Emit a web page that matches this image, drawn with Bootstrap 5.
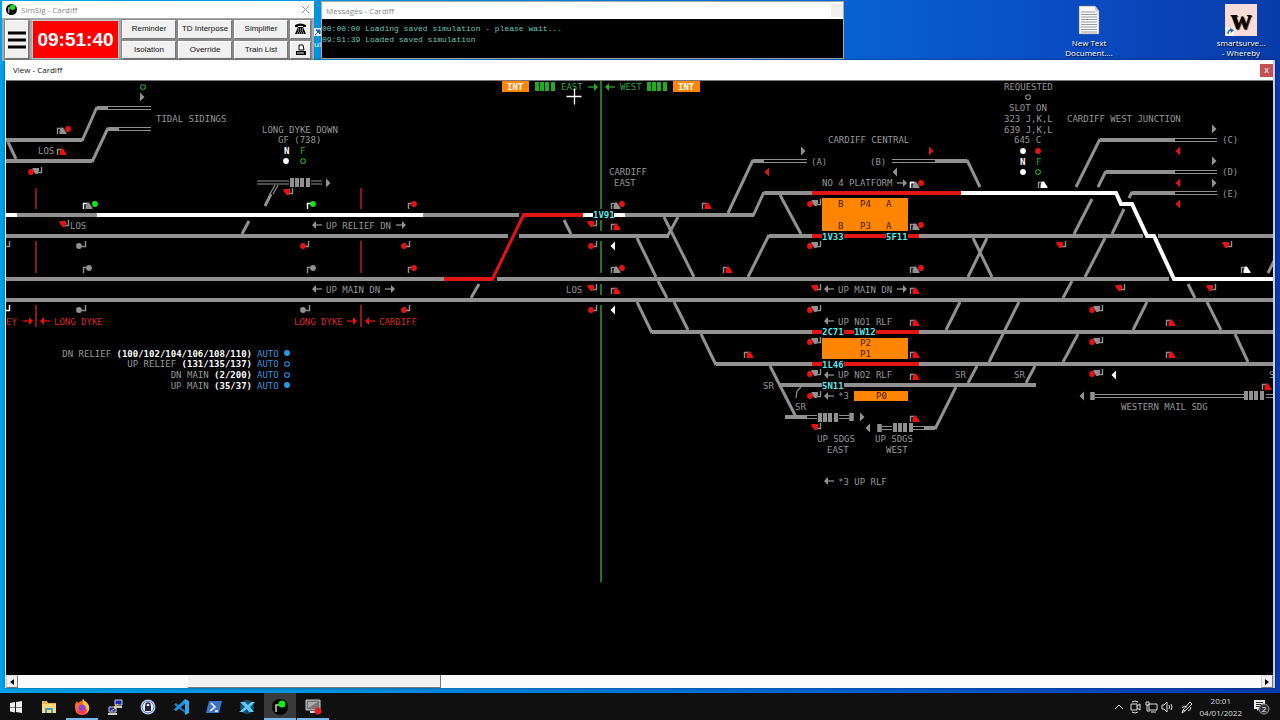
<!DOCTYPE html>
<html lang="en">
<head>
<meta charset="utf-8">
<meta name="viewport" content="width=device-width, initial-scale=1">
<title>View - Cardiff</title>
<link href="https://cdn.jsdelivr.net/npm/bootstrap@5.3.0/dist/css/bootstrap.min.css" rel="stylesheet">
<style>
  :root { --track:#919191; --label:#979797; --sig-red:#e31414; --cyan:#5ce6e6; --orange:#ff8400; }
  body { font-family:"Open Sans","Noto Sans",sans-serif; background:#0846b8; }
  .desk { background:linear-gradient(90deg,#00a2ec 0,#0094e0 24%,#0763d4 65%,#0a4bc2 84%,#093caa 100%); }
  .win { background:#fff; }
  .win-tools { left:2px; top:1px; width:312px; height:57px; }
  .win-msgs { left:321px; top:1px; width:523px; height:58px; border:1px solid #aaa; }
  .win-view { left:5px; right:5px; top:60px; bottom:5px; border-right:2px solid #c6cde6; box-shadow:0 0 3px #0006; }
  .caption { font-size:8px; line-height:17px; color:#888; }
  .view-caption { font-size:8px; line-height:20px; color:#111; }
  .close-red { width:13px; height:13px; background:#c4504f; color:#fff; font-size:9px; line-height:10px; }
  .tool-row { background:#a9a9a9; padding:2px 3px; gap:3px; }
  .tool { background:#f0f0f0; border:1px solid; border-color:#fff #777 #777 #fff; font:8px/14px "Liberation Sans",sans-serif; color:#111; padding:0; outline:1px solid #888; }
  .tool-grid { display:grid; grid-template-columns:54px 54px 54px 21px; gap:2px; }
  .clock-box { width:87px; background:#f00; color:#fff; border:1px solid #ccc; font:bold 19px/37px "Liberation Sans",sans-serif; }
  .log { background:#000; color:#6cc8b8; font:8px/11px "Liberation Mono",monospace; }
  .desk-icon { top:4px; width:60px; font-size:8px; line-height:10px; color:#fff; text-shadow:1px 1px 1px #000; }
  .diagram { background:#000; border-top:1px solid #777; margin-left:1px; }
  .diagram svg { display:block; }
  .diagram text { font:9px "DejaVu Sans Mono",monospace; fill:var(--label); white-space:pre; }
  .diagram text.white, .diagram tspan.white { fill:#fff; font-weight:bold; }
  .diagram text.green { fill:#37a337; }
  .diagram text.rd { fill:#d82828; }
  .diagram text.train { fill:var(--cyan); font-weight:bold; }
  .diagram text.plat { fill:#3a2000; }
  .diagram .blue { fill:#3b93dd; }
  .g { color:var(--track); } .r { color:var(--sig-red); } .w { color:#fff; } .gn { color:#2fa62f; }
  .sbar { height:13px; background:#fafafa; padding-left:1px; }
  .sbtn { width:12px; background:#f0f0f0; border:1px solid; border-color:#ddd #777 #777 #ccc; padding:0; }
  .sthumb { width:20%; margin-left:170px; background:#f0f0f0; border-right:1px solid #777; border-bottom:1px solid #777; }
  .taskbar { height:27px; background:#101010; color:#ddd; }
  .task-list { gap:1px; }
  .task { width:32px; background:none; border:0; border-bottom:2px solid transparent; padding:0; }
  .task.open { border-color:#76b9ed; }
  .task.current { background:#3a3a3a; }
  .tray { gap:2px; font-size:8px; line-height:12px; }
  .tray button { background:none; border:0; padding:0; color:#ddd; }
</style>
</head>
<body class="vh-100 d-flex flex-column overflow-hidden">

<main class="desk position-relative flex-grow-1 overflow-hidden">
  <a href="#" class="desk-icon position-absolute text-center text-decoration-none" style="left:1059px">
    <svg class="d-block mx-auto" width="24" height="34" viewBox="0 0 24 34"><path d="M2 2h16l4 5v23H2z" fill="#fafafa" stroke="#777" stroke-width=".6"/><path d="M18 2v5h4" fill="#ccc"/><path d="M4 8h14M4 10.500h16M4 13h16M4 15.500h16M4 18h16M4 20.500h16M4 23h16M4 25.500h16M4 28h16" stroke="#999" stroke-width="1"/></svg>
    New Text<br>Document....
  </a>
  <a href="#" class="desk-icon position-absolute text-center text-decoration-none" style="left:1211px">
    <svg class="d-block mx-auto" width="34" height="34" viewBox="0 0 34 34"><path d="M1 0h32v32H1z" fill="#f9dcd8"/><text x="17" y="25" text-anchor="middle" font-family="Liberation Serif,serif" font-weight="bold" font-size="29">w</text><path d="M2 24h8v8H2z" fill="#fff"/><path d="M4 30c0-3 1-4 3-4" fill="none" stroke="#1664b4" stroke-width="1.500"/><path d="M6 24l4 2-3 3z" fill="#1664b4"/></svg>
    smartsurve...<br>- Whereby
  </a>
  <svg class="position-absolute" style="left:314px;top:27px" width="8" height="24"><path d="M0 1h7v8H0z" fill="#e8eef8"/><path d="M1 8l3-3M2 3h4v4z" stroke="#1664b4" fill="#1664b4"/><text x="0" y="20" font-size="8" fill="#fff">ui</text></svg>

  <section class="win win-tools position-absolute d-flex flex-column">
    <header class="caption d-flex align-items-center pe-1">
      <svg class="mx-1" width="11" height="11" viewBox="0 0 20 20" style="margin-left:2px"><circle cx="10" cy="10" r="10" fill="#000"/><path d="M5 16V7h5" stroke="#ccc" stroke-width="2" fill="none"/><circle cx="12" cy="6" r="5" fill="#1be01b"/></svg>
      <span class="flex-grow-1">SimSig - Cardiff</span>
      <button class="border-0 bg-transparent p-0 lh-1" aria-label="Close"><svg width="9" height="9"><path d="M1 1l7 7M8 1l-7 7" stroke="#999"/></svg></button>
    </header>
    <div class="tool-row d-flex flex-grow-1">
      <button class="tool px-0" style="width:24px" aria-label="Menu"><svg width="20" height="20"><path d="M1 3h18M1 10h18M1 17h18" stroke="#000" stroke-width="3"/></svg></button>
      <div class="clock-box text-center">09:51:40</div>
      <div class="tool-grid flex-grow-1">
        <button class="tool">Reminder</button><button class="tool text-nowrap">TD Interpose</button><button class="tool">Simplifier</button>
        <button class="tool lh-1" aria-label="Phone"><svg width="13" height="12" viewBox="0 0 13 12"><path d="M1 4V2q5-3 11 0v2H9V3H4v1z"/><path d="M4 4h5l3 7H1z"/><path d="M4 6h5M4 8h6M3 10h7" stroke="#eee" stroke-dasharray="1"/></svg></button>
        <button class="tool">Isolation</button><button class="tool">Override</button><button class="tool">Train List</button>
        <button class="tool lh-1" aria-label="Print"><svg width="12" height="12" viewBox="0 0 12 12"><path d="M4 1h4l1 5H4z" fill="#fff" stroke="#000"/><path d="M1 7h10v4H1z"/><path d="M2 9h7" stroke="#eee"/></svg></button>
      </div>
    </div>
  </section>

  <section class="win win-msgs position-absolute d-flex flex-column">
    <header class="caption d-flex justify-content-between align-items-center ps-1"><span>Messages - Cardiff</span><button class="border-0 p-0" style="width:12px;height:13px" aria-label="Close"></button></header>
    <div class="log flex-grow-1 pt-1"><div>00:00:00 Loading saved simulation - please wait...</div><div>09:51:39 Loaded saved simulation</div></div>
  </section>

  <section class="win win-view position-absolute d-flex flex-column">
    <header class="view-caption d-flex justify-content-between align-items-center"><span class="ps-1 ms-1">View - Cardiff</span><button class="close-red border-0 p-0" aria-label="Close">x</button></header>
    <div class="diagram flex-grow-1 overflow-hidden">
    <svg width="1268" height="594" viewBox="6 81 1268 594" role="img" aria-label="Cardiff track diagram">
      <defs>
        <path id="postR" d="M.5 0V-5.500H4" fill="none" stroke="currentColor" stroke-width="1.400"/>
        <path id="shR" d="M3 0V-3L4.500-6.500h2L10-1V0z" fill="currentColor" transform="translate(-.5)"/>
        <path id="postL" d="M-.5 0v5.500h-4" fill="none" stroke="currentColor" stroke-width="1.400"/>
        <path id="shL" d="M-9.500 1V3l3 4h2l1.500-3V1z" fill="currentColor"/>
        <circle id="dot" r="2.900" fill="currentColor"/>
        <circle id="ring" r="2.300" fill="none" stroke="currentColor" stroke-width="1.100"/>
        <path id="triR" d="M-2-4.500L2.500 0-2 4.500z" fill="currentColor"/>
        <path id="triL" d="M2-4.500L-2.500 0 2 4.500z" fill="currentColor"/>
        <g id="arrR"><path d="M0 0h8" stroke="currentColor" stroke-width="1.300"/><path d="M6-4l4 4-4 4z" fill="currentColor"/></g>
        <g id="arrL"><path d="M2 0h8" stroke="currentColor" stroke-width="1.300"/><path d="M4-4L0 0l4 4z" fill="currentColor"/></g>
        <g id="sR"><use href="#postR" class="g"/><use href="#shR" class="r"/></g>
        <g id="sL"><use href="#postL" class="g"/><use href="#shL" class="r"/></g>
        <g id="dR"><use href="#postR" class="g"/><use href="#dot" x="6" y="-5" class="r"/></g>
        <g id="dL"><use href="#postL" class="g"/><use href="#dot" x="-6" y="5" class="r"/></g>
        <g id="gR"><use href="#postR" class="g"/><use href="#dot" x="6" y="-5" class="g"/></g>
        <g id="gL"><use href="#postL" class="g"/><use href="#dot" x="-7" y="5" class="g"/></g>
        <g id="sdR"><use href="#postR" class="g"/><use href="#shR" class="g"/><use href="#dot" x="11" y="-5" class="r"/></g>
        <g id="sdL"><use href="#postL" class="g"/><use href="#shL" class="g"/><use href="#dot" x="-11" y="5" class="r"/></g>
        <g id="wR"><use href="#postR" class="g"/><use href="#shR" class="w"/></g>
        <path id="stops" d="M2 0v9M7 0v9M12 0v9M18 0v9" stroke="#919191" stroke-width="4"/>
      </defs>

      <!-- boundaries -->
      <path d="M36 188v21M36 241v32M36 305v22M361 188v21M361 241v32M361 305v22" stroke="#b82222" stroke-width="1.500"/>
      <path d="M601 81v128M601 220v11M601 241v32M601 284v11M601 305v277" stroke="#2f9a3a" stroke-width="1.500"/>

      <!-- running lines -->
      <g fill="none" stroke="#919191" stroke-width="4">
        <path d="M6 140H82M97 108h11M6 161H92M108 129h11M17 215h80M423 215h96M625 215h129M6 236h502M519 236h150M769 236h374M1158 236h116M6 279h438M497 279h672M6 300h1268M652 332h622M716 364h558M780 385h256M785 417h22M924 428h11M753 161h11M764 193h48M935 161h32M1100 140h75M1106 172h69M1132 193h43"/>
      </g>
      <!-- crossovers -->
      <g fill="none" stroke="#919191" stroke-width="3">
        <path d="M82 141L97 107M92 162L108 128M8 142l8 17M265 206l6-12M242 234l7-13M564 220l7 14M471 298l8-14M667 237l11-20M664 217l30 60M637 238l19 39M658 281l9 17M674 302l14 28M637 302l15 31M701 334l15 31M728 213L753 160M753 216L764 192M780 195l21 39M769 235L748 277M967 160L980 187M973 238l19 39M987 238L968 277M960 302L946 330M1019 302L989 362M977 366L968 383M1035 366L1026 383M770 366L796 417M935 429L956 387M1076 187L1100 139M1098 187L1106 171M1129 198L1132 192M1092 199L1074 234M1124 209L1112 234M1105 238L1085 277M1072 281L1063 298M1147 302L1133 330M1078 334L1063 362M1188 284l7 14M1207 302l14 28M1235 334l13 28M1274 261L1268 273"/>
        <path d="M801 387l-4 4-1 7M270 194l5-9M273 194l5-9" stroke-width="1.200"/>
      </g>
      <!-- sidings -->
      <g fill="none" stroke="#919191" stroke-width="1.200">
        <path d="M108 106.500h43M108 109.500h43M119 127.500h32M119 130.500h32M257 181h32M257 184h32M311 181h11M311 184h11M764 159.500h43M764 162.500h43M892 159.500h43M892 162.500h43M1175 138.500h42M1175 141.500h42M1175 170.500h42M1175 173.500h42M1175 191.500h42M1175 194.500h42M807 415.500h10M807 418.500h10M839 415.500h10M839 418.500h10M882 426.500h10M882 429.500h10M913 426.500h11M913 429.500h11M1095 394.500h149M1095 397.500h149M1266 394.500h8M1266 397.500h8"/>
      </g>
      <use href="#stops" x="290" y="178"/><use href="#stops" x="818" y="413"/><use href="#stops" x="893" y="423"/><use href="#stops" x="1244" y="391"/>
      <path d="M851.500 413v8M879.500 424v8M1092.500 392v8" stroke="#919191" stroke-width="4.500"/>

      <!-- set routes and occupied sections -->
      <path d="M6 215h11M97 215h326M583 215h42M961 193h155l5 11h11l15 32h7l20 43h100" fill="none" stroke="#fff" stroke-width="4"/>
      <path d="M444 279h49M523 215h60M812 193h149M812 236h107M812 332h107M812 364h107" stroke="#e31414" stroke-width="4"/>
      <path d="M492 280L524 214" stroke="#e31414" stroke-width="3"/>

      <!-- platforms -->
      <path d="M822 198h86v33h-86zM822 338h86v21h-86zM854 391h54v10h-54zM502 81h27v11h-27zM673 81h27v11h-27z" fill="#ff8400"/>
      <text class="plat" x="838" y="207">B</text><text class="plat" x="860" y="207">P4</text><text class="plat" x="886" y="207">A</text>
      <text class="plat" x="838" y="229">B</text><text class="plat" x="860" y="229">P3</text><text class="plat" x="886" y="229">A</text>
      <text class="plat" x="860" y="346">P2</text><text class="plat" x="860" y="357">P1</text><text class="plat" x="876" y="399">P0</text>

      <!-- train descriptions -->
      <path d="M593 211h21v8h-21zM822 232h22v8h-22zM886 232h22v8h-22zM822 328h22v8h-22zM854 328h22v8h-22zM822 360h22v8h-22zM822 381h22v8h-22z"/>
      <text class="train" x="593" y="218">1V91</text><text class="train" x="822" y="240">1V33</text><text class="train" x="886" y="240">5F11</text>
      <text class="train" x="822" y="335">2C71</text><text class="train" x="854" y="335">1W12</text><text class="train" x="822" y="368">1L46</text><text class="train" x="822" y="389">5N11</text>

      <!-- header -->
      <text class="white" x="507" y="90">INT</text><text class="white" x="678" y="90">INT</text>
      <path d="M537 82v9M542 82v9M547 82v9M553 82v9M649 82v9M654 82v9M659 82v9M665 82v9" stroke="#1fae1f" stroke-width="4"/>
      <text class="green" x="561" y="90">EAST</text><text class="green" x="620" y="90">WEST</text>
      <use href="#arrR" x="588" y="87" class="gn"/><use href="#arrL" x="605" y="87" class="gn"/>

      <!-- labels -->
      <text x="156" y="122">TIDAL SIDINGS</text><text x="38" y="154">LOS</text><text x="262" y="133">LONG DYKE DOWN</text><text x="278" y="143">GF (738)</text>
      <text class="white" x="284" y="154">N</text><text class="green" x="300" y="154">F</text>
      <text x="70" y="229">LOS</text><text x="326" y="229">UP RELIEF DN</text><text x="326" y="293">UP MAIN DN</text><text x="566" y="293">LOS</text>
      <text x="609" y="175">CARDIFF</text><text x="614" y="186">EAST</text>
      <text class="rd" x="6" y="325">EY</text><text class="rd" x="54" y="325">LONG DYKE</text><text class="rd" x="294" y="325">LONG DYKE</text><text class="rd" x="379" y="325">CARDIFF</text>
      <text x="252" y="357" text-anchor="end">DN RELIEF <tspan class="white">(100/102/104/106/108/110)</tspan></text>
      <text x="252" y="367" text-anchor="end">UP RELIEF <tspan class="white">(131/135/137)</tspan></text>
      <text x="252" y="378" text-anchor="end">DN MAIN <tspan class="white">(2/200)</tspan></text>
      <text x="252" y="389" text-anchor="end">UP MAIN <tspan class="white">(35/37)</tspan></text>
      <text x="257" y="357"><tspan class="blue">AUTO</tspan></text><text x="257" y="367"><tspan class="blue">AUTO</tspan></text><text x="257" y="378"><tspan class="blue">AUTO</tspan></text><text x="257" y="389"><tspan class="blue">AUTO</tspan></text>
      <text x="828" y="143">CARDIFF CENTRAL</text><text x="811" y="165">(A)</text><text x="870" y="165">(B)</text><text x="822" y="186">NO 4 PLATFORM</text>
      <text x="838" y="293">UP MAIN DN</text><text x="838" y="325">UP NO1 RLF</text><text x="838" y="378">UP NO2 RLF</text><text x="838" y="399">*3</text>
      <text x="763" y="389">SR</text><text x="795" y="410">SR</text><text x="955" y="378">SR</text><text x="1014" y="378">SR</text><text x="1269" y="378">S</text>
      <text x="817" y="442">UP SDGS</text><text x="827" y="453">EAST</text><text x="875" y="442">UP SDGS</text><text x="886" y="453">WEST</text><text x="838" y="485">*3 UP RLF</text>
      <text x="1004" y="90">REQUESTED</text><text x="1009" y="111">SLOT ON</text><text x="1004" y="122">323 J,K,L</text><text x="1004" y="133">639 J,K,L</text><text x="1014" y="143">645 C</text>
      <text class="white" x="1020" y="165">N</text><text class="green" x="1036" y="165">F</text>
      <text x="1067" y="122">CARDIFF WEST JUNCTION</text><text x="1222" y="143">(C)</text><text x="1222" y="175">(D)</text><text x="1222" y="197">(E)</text><text x="1121" y="410">WESTERN MAIL SDG</text>

      <!-- direction arrows -->
      <g class="g">
        <use href="#arrL" x="312" y="225"/><use href="#arrR" x="396" y="225"/><use href="#arrL" x="312" y="289"/><use href="#arrR" x="385" y="289"/>
        <use href="#arrR" x="897" y="183"/><use href="#arrL" x="824" y="289"/><use href="#arrR" x="897" y="289"/><use href="#arrL" x="824" y="321"/><use href="#arrL" x="824" y="375"/><use href="#arrL" x="824" y="396"/><use href="#arrL" x="824" y="481"/>
        <use href="#triR" x="142" y="97"/><use href="#triR" x="328" y="183"/><use href="#triR" x="803" y="151"/><use href="#triR" x="1214" y="129"/><use href="#triR" x="1214" y="161"/><use href="#triR" x="1214" y="183"/><use href="#triR" x="862" y="417"/>
        <use href="#triL" x="895" y="172"/><use href="#triL" x="868" y="428"/><use href="#triL" x="1082" y="396"/><use href="#ring" x="1028" y="97"/>
      </g>
      <g class="r">
        <use href="#arrR" x="23" y="321"/><use href="#arrL" x="40" y="321"/><use href="#arrR" x="347" y="321"/><use href="#arrL" x="365" y="321"/>
        <use href="#triR" x="931" y="151"/><use href="#triL" x="767" y="172"/><use href="#triL" x="1178" y="151"/><use href="#triL" x="1178" y="183"/><use href="#triL" x="1178" y="204"/><use href="#dot" x="1038" y="151"/>
      </g>
      <g class="w"><use href="#triL" x="613" y="246"/><use href="#triL" x="613" y="310"/><use href="#triL" x="1114" y="375"/><use href="#dot" x="286" y="161"/><use href="#dot" x="1023" y="151"/><use href="#dot" x="1023" y="172"/></g>
      <g class="gn"><use href="#ring" x="143" y="87"/><use href="#ring" x="303" y="161"/><use href="#ring" x="1038" y="172"/></g>
      <g color="#2c98ea"><use href="#dot" x="287" y="353"/><use href="#ring" x="287" y="364"/><use href="#ring" x="287" y="375"/><use href="#dot" x="287" y="385"/></g>

      <!-- signals reading right -->
      <use href="#sdR" x="57" y="134"/><use href="#sR" x="57" y="155"/><use href="#dR" x="408" y="209"/><use href="#dR" x="408" y="273"/><use href="#gR" x="83" y="273"/><use href="#gR" x="307" y="273"/>
      <use href="#postR" x="83" y="209" class="w"/><use href="#shR" x="83" y="209" class="g"/><use href="#postR" x="307" y="209" class="w"/>
      <g color="#16e516"><use href="#dot" x="95" y="204"/><use href="#dot" x="313" y="204"/></g>
      <use href="#sdR" x="611" y="209"/><use href="#sdR" x="611" y="273"/><use href="#sR" x="611" y="230"/><use href="#sR" x="611" y="294"/><use href="#sR" x="702" y="209"/><use href="#sR" x="723" y="273"/><use href="#sR" x="744" y="358"/>
      <use href="#sdR" x="910" y="188"/><use href="#postR" x="910" y="188" class="w"/><use href="#sdR" x="910" y="230"/><use href="#sdR" x="910" y="273"/><use href="#sR" x="910" y="294"/><use href="#sR" x="910" y="326"/><use href="#sR" x="910" y="358"/><use href="#sR" x="910" y="380"/><use href="#sR" x="910" y="422"/>
      <use href="#wR" x="1038" y="188"/><use href="#wR" x="1241" y="273"/><use href="#sR" x="1166" y="326"/><use href="#sR" x="1166" y="358"/><use href="#sR" x="1262" y="390"/>
      <!-- signals reading left -->
      <use href="#sdL" x="42" y="167"/><use href="#sL" x="293" y="188"/><use href="#sL" x="69" y="220"/><use href="#gL" x="86" y="241"/><use href="#gL" x="86" y="305"/><use href="#gL" x="310" y="305"/><use href="#postL" x="10" y="241" class="g"/><use href="#postL" x="10" y="305" class="w"/>
      <use href="#dL" x="309" y="241"/><use href="#dL" x="410" y="241"/><use href="#dL" x="410" y="305"/><use href="#sL" x="597" y="220"/><use href="#dL" x="597" y="241"/><use href="#sL" x="597" y="284"/><use href="#dL" x="597" y="305"/>
      <use href="#sdL" x="821" y="199"/><use href="#sdL" x="821" y="241"/><use href="#sL" x="821" y="284"/><use href="#sdL" x="821" y="305"/><use href="#sdL" x="821" y="337"/><use href="#sdL" x="821" y="369"/><use href="#sdL" x="821" y="391"/><use href="#sL" x="821" y="423"/>
      <use href="#sL" x="1066" y="241"/><use href="#sL" x="1232" y="241"/><use href="#sL" x="1125" y="284"/><use href="#sL" x="1216" y="284"/><use href="#sdL" x="1103" y="305"/><use href="#sdL" x="1103" y="337"/><use href="#sdL" x="1103" y="369"/>

      <!-- pointer -->
      <path d="M566.500 96.500h15M574.500 88.500v16" stroke="#fff" stroke-width="1.300"/>
    </svg>
    </div>
    <div class="sbar d-flex flex-shrink-0">
      <button class="sbtn d-flex align-items-center justify-content-center" aria-label="Scroll left"><svg width="4" height="6"><path d="M4 0L0 3l4 3z"/></svg></button>
      <div class="sthumb"></div>
      <button class="sbtn d-flex align-items-center justify-content-center ms-auto" aria-label="Scroll right"><svg width="4" height="6"><path d="M0 0l4 3-4 3z"/></svg></button>
    </div>
  </section>
</main>

<nav class="taskbar d-flex flex-shrink-0">
  <div class="task-list d-flex">
    <button class="task" aria-label="Start"><svg width="12" height="12" viewBox="0 0 12 12"><path d="M0 2l5-1v5H0zM6 1l6-1v6H6zM0 6.500h5v5l-5-1zM6 6.500h6V12l-6-1z" fill="#eee"/></svg></button>
    <button class="task" aria-label="Files"><svg width="16" height="14" viewBox="0 0 16 14"><path d="M1 1h5l1 2h8v10H1z" fill="#e8b84a"/><path d="M1 4h14v9H1z" fill="#fbd975"/><path d="M4 13V8h8v5h-2v-3H6v3z" fill="#4a9fd4"/></svg></button>
    <button class="task open" aria-label="Firefox"><svg width="16" height="16" viewBox="0 0 16 16"><path d="M1 8q0-4 2-6l1 2q2-2 4-2 0-2 1-2 1 2 3 3 3 2 3 6 0 7-7 7T1 8z" fill="#ff6a2a"/><path d="M9 0q1 2 3 3 4 3 3 8-1 2-3 3 2-6-3-9z" fill="#ffc933"/><circle cx="8" cy="9" r="3.500" fill="#8747d8"/><path d="M2 10q2 3 6 2l2-2q3 0 3 1-2 5-7 4-3-2-4-5z" fill="#f83a5c"/></svg></button>
    <button class="task" aria-label="Terminal"><svg width="16" height="16" viewBox="0 0 16 16"><path d="M8 1h7v5H8zM2 8h7v5H2z" fill="#1a28b8" stroke="#ccc"/><path d="M7 8h8M1 15h9" stroke="#ccc" stroke-width="2"/><path d="M11 5L7 8l2 1-5 3" stroke="#fd3" fill="none"/></svg></button>
    <button class="task" aria-label="Passwords"><svg width="16" height="16" viewBox="0 0 16 16"><circle cx="8" cy="8" r="7.500" fill="#b7c8ee"/><circle cx="8" cy="8" r="5.800" fill="#e6ecfa" stroke="#6a83c8"/><path d="M5 7h6v5H5z" fill="#223"/><path d="M6 7V5q2-2 4 0v2" fill="none" stroke="#223" stroke-width="1.400"/></svg></button>
    <button class="task" aria-label="Code editor"><svg width="17" height="16" viewBox="0 0 17 16"><path d="M12 0l4 2v12l-4 2z" fill="#30a8f0"/><path d="M12 2v12L1 5.500 3 4l9 8V4L3 12l-2-1.500z" fill="#1b83d0"/><path d="M12 0v4.500L3 12l-2-1.500z" fill="#2390dd"/></svg></button>
    <button class="task" aria-label="PowerShell"><svg width="16" height="14" viewBox="0 0 16 14"><path d="M3 1h13l-3 12H0z" fill="#3f74cc"/><path d="M5 3l4 4-5 4M9 11h3" stroke="#fff" stroke-width="1.500" fill="none"/></svg></button>
    <button class="task" aria-label="X"><svg width="16" height="16" viewBox="0 0 16 16"><circle cx="8" cy="8" r="7" fill="#14506e"/><path d="M1 3h5l3 3 3-3h4l-5 5 4 5h-5l-2-3-4 3H0l6-5z" fill="#62c8f3"/></svg></button>
    <button class="task open current" aria-label="SimSig"><svg width="16" height="16" viewBox="0 0 16 16"><circle cx="8" cy="8" r="8" fill="#000"/><path d="M4 13V6h4" stroke="#ccc" stroke-width="1.500" fill="none"/><circle cx="10" cy="5" r="3.500" fill="#10f010"/></svg></button>
    <button class="task open" aria-label="Recorder"><svg width="17" height="16" viewBox="0 0 17 16"><path d="M1 1h14v10H1z" fill="#777" stroke="#ccc"/><path d="M3 3h10L3 9z" fill="#aaa"/><path d="M5 13h6" stroke="#ccc" stroke-width="2"/><circle cx="13" cy="12" r="3.500" fill="#e02020"/></svg></button>
  </div>
  <div class="tray d-flex align-items-center ms-auto">
    <button aria-label="Hidden icons"><svg width="14" height="14" viewBox="0 0 14 14" fill="none" stroke="currentColor"><path d="M3 9l4-4 4 4"/></svg></button>
    <button aria-label="Camera"><svg width="14" height="14" viewBox="0 0 14 14" fill="none" stroke="currentColor"><path d="M4 2q3-2 6 0M4 12q3 2 6 0M3 4h6v6H3zM9 6l3-2v6L9 8"/></svg></button>
    <button aria-label="Network"><svg width="14" height="14" viewBox="0 0 14 14" fill="none" stroke="currentColor"><path d="M5 4h8v6H5zM7 12h5M2 2h3v3H2zM3 5v6h3"/></svg></button>
    <button aria-label="Volume"><svg width="14" height="14" viewBox="0 0 14 14" fill="none" stroke="currentColor"><path d="M2 5h2l3-3v10L4 9H2zM9 5q1 2 0 4M11 4q2 3 0 6"/></svg></button>
    <button class="ms-1" aria-label="Pen"><svg width="14" height="14" viewBox="0 0 14 14" fill="none" stroke="currentColor"><path d="M3 10l7-8 2 2-7 7zM3 10l-1 3 3-2M2 8q2-3 5-1M8 11q3-1 3-4"/></svg></button>
    <div class="text-center ms-1 me-2">20:01<br>04/01/2022</div>
    <button class="pe-1 me-1" aria-label="2 notifications"><svg width="20" height="18" viewBox="0 0 20 18"><path d="M2 2h11v9H7l-2 2v-2H2z" fill="#eee"/><path d="M4 4.500h7M4 6.500h7M4 8.500h5" stroke="#222"/><circle cx="12" cy="11" r="5" fill="#333" stroke="#999"/><text x="12" y="14" text-anchor="middle" font-size="8" fill="#fff">2</text></svg></button>
  </div>
</nav>
<script src="https://cdn.jsdelivr.net/npm/bootstrap@5.3.0/dist/js/bootstrap.bundle.min.js"></script>
</body>
</html>
